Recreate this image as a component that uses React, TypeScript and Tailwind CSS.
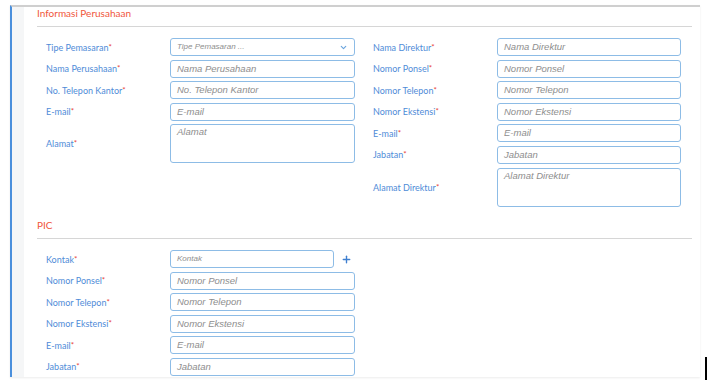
import { ChevronDown, Plus } from "lucide-react";

type Field = { label: string; placeholder: string; area?: boolean; select?: boolean; small?: boolean };

const perusahaan: Field[] = [
  { label: "Tipe Pemasaran", placeholder: "Tipe Pemasaran ...", select: true, small: true },
  { label: "Nama Perusahaan", placeholder: "Nama Perusahaan" },
  { label: "No. Telepon Kantor", placeholder: "No. Telepon Kantor" },
  { label: "E-mail", placeholder: "E-mail" },
  { label: "Alamat", placeholder: "Alamat", area: true },
];

const direktur: Field[] = [
  { label: "Nama Direktur", placeholder: "Nama Direktur" },
  { label: "Nomor Ponsel", placeholder: "Nomor Ponsel" },
  { label: "Nomor Telepon", placeholder: "Nomor Telepon" },
  { label: "Nomor Ekstensi", placeholder: "Nomor Ekstensi" },
  { label: "E-mail", placeholder: "E-mail" },
  { label: "Jabatan", placeholder: "Jabatan" },
  { label: "Alamat Direktur", placeholder: "Alamat Direktur", area: true },
];

const pic: Field[] = [
  { label: "Nomor Ponsel", placeholder: "Nomor Ponsel" },
  { label: "Nomor Telepon", placeholder: "Nomor Telepon" },
  { label: "Nomor Ekstensi", placeholder: "Nomor Ekstensi" },
  { label: "E-mail", placeholder: "E-mail" },
  { label: "Jabatan", placeholder: "Jabatan" },
];

function Label({ text }: { text: string }) {
  return (
    <span className="w-[124px] shrink-0 text-[9px] text-[#4f8cd8] font-['Lato',sans-serif] leading-none">
      {text}
      <span className="relative top-[-1px] text-[8px] text-[#e8453c]">*</span>
    </span>
  );
}

function Box({ f, w }: { f: Field; w: string }) {
  return (
    <div
      className={`${w} ${f.area ? "h-[39px] items-start pt-[2px]" : "h-[18px] items-center"} flex justify-between rounded-[3px] border border-[#8dbce6] bg-white px-[6px]`}
    >
      <span
        className={`${f.small ? "text-[8px]" : "text-[9.5px]"} italic text-[#8e8e8e] font-['Liberation_Sans',Arial,sans-serif] leading-none`}
      >
        {f.placeholder}
      </span>
      {f.select && <ChevronDown size={9} strokeWidth={3} className="text-[#6aa4dd]" />}
    </div>
  );
}

function Row({ f, w = "w-[185px]" }: { f: Field; w?: string }) {
  return (
    <div className="flex items-center">
      <Label text={f.label} />
      <Box f={f} w={w} />
    </div>
  );
}

function Heading({ text }: { text: string }) {
  return (
    <div className="border-b border-[#d6d6d6] pb-[8px] text-[10px] leading-[10px] text-[#f0563b] font-['Lato',sans-serif]">
      {text}
    </div>
  );
}

export default function App() {
  return (
    <div className="relative h-[388px] w-[707px] overflow-hidden bg-white pl-[10px] pt-[5px]">
      <div className="flex h-[372px] w-[690px] border-l-2 border-t-2 border-l-[#4a8fdc] border-t-[#cfcfcf] shadow-[0_1px_2px_rgba(0,0,0,0.08)]">
        <div className="w-[12px] shrink-0 bg-[#f5f6f7]" />
        <div className="flex-1 pl-[13px] pr-[8px] pt-[1px]">
          <Heading text="Informasi Perusahaan" />
          <div className="mt-[11px] flex pl-[9px]">
            <div className="flex w-[327px] flex-col gap-[3.5px]">
              {perusahaan.map((f) => (
                <Row key={f.label} f={f} />
              ))}
            </div>
            <div className="flex flex-col gap-[3.5px]">
              {direktur.map((f, i) => (
                <div key={f.label} className={i === 6 ? "mt-[1px]" : ""}>
                  <Row f={f} w="w-[184px]" />
                </div>
              ))}
            </div>
          </div>
          <div className="mt-[13px]">
            <Heading text="PIC" />
          </div>
          <div className="mt-[11px] flex flex-col gap-[3.5px] pl-[9px]">
            <div className="flex items-center">
              <Label text="Kontak" />
              <Box f={{ label: "Kontak", placeholder: "Kontak", small: true }} w="w-[164px]" />
              <Plus size={11} strokeWidth={3} className="ml-[7px] text-[#3f7fd0]" />
            </div>
            {pic.map((f) => (
              <Row key={f.label} f={f} />
            ))}
          </div>
        </div>
      </div>
      <div className="absolute left-[705px] top-[357px] h-[23px] w-[2px] bg-black" />
    </div>
  );
}
